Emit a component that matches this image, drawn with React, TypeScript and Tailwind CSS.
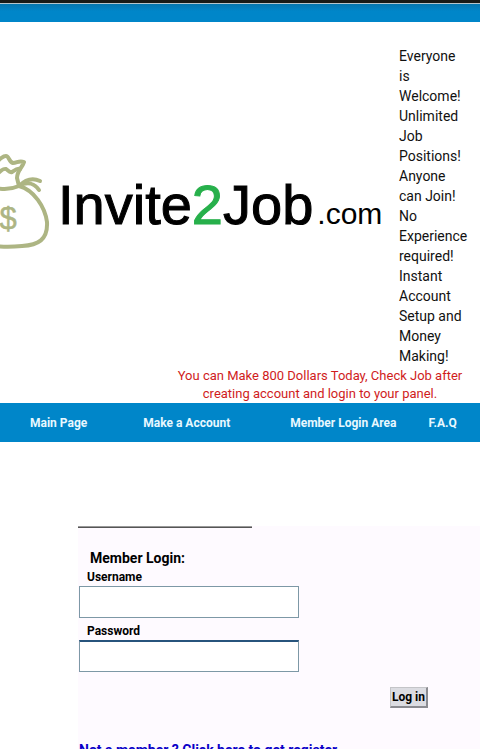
import React from "react";

const navLinks = [
  { label: "Main Page", href: "#main", className: "ml-[30px]" },
  { label: "Make a Account", href: "#register", className: "ml-14" },
  { label: "Member Login Area", href: "#login", className: "ml-15" },
  { label: "F.A.Q", href: "#faq", className: "ml-8" },
];

const MoneyBag: React.FC = () => (
  <svg
    viewBox="0 150 52 102"
    className="h-[102px] w-[52px] shrink-0"
    fill="none"
    stroke="#adb583"
    strokeWidth="4"
    strokeLinecap="round"
    strokeLinejoin="round"
    aria-hidden="true"
  >
    <path d="M-4 163C-1 160 2 156 6 156C9 156 9 162 13 163C17 163 19 160 24 162C22 168 17 171 17 178L19 186" />
    <path d="M-3 174C1 171 3 168 6 169C8 170 9 173 12 172C15 170 17 168 20 169" />
    <path d="M-4 188C4 190 12 189 19 186" />
    <path d="M19 186C25 180 32 177 40 181" />
    <path d="M19 186C28 181 35 184 39 190" />
    <path d="M19 186C34 190 45 207 47 222C48 240 38 245 22 246C12 247 3 247 -4 246" />
    <text
      x="8"
      y="229"
      textAnchor="middle"
      fontFamily="Liberation Sans, sans-serif"
      fontSize="31"
      fill="#adb583"
      strokeWidth="0.5"
    >
      $
    </text>
  </svg>
);

const Header: React.FC = () => (
  <header>
    <div className="h-1 border-b border-[#b5c6cc] bg-[#191a16]" />
    <div className="h-[18px] bg-linear-to-b from-[#0676ad] to-[#0086c9] to-40%" />
    <div className="flex items-start pt-6">
      <div className="flex min-w-0 flex-1 pt-[104px]">
        <MoneyBag />
        <h1 className="ml-1 flex items-baseline whitespace-nowrap pl-0.5 pt-[23px] font-['Liberation_Sans',sans-serif] leading-[64px] text-black [-webkit-text-stroke:1px]">
          <span className="text-[56px]">
            Invite<span className="text-[#27b04b]">2</span>Job
          </span>
          <span className="ml-1 text-[30px] [-webkit-text-stroke:0px]">.com</span>
        </h1>
      </div>
      <p className="w-[81px] shrink-0 pr-3 text-sm leading-5 text-[#111]">
        Everyone is Welcome! Unlimited Job Positions! Anyone can Join! No
        Experience required! Instant Account Setup and Money Making!
      </p>
    </div>
    <p className="ml-auto w-80 px-4 pt-px text-center text-[13px] leading-[18px] text-[#d01c1c]">
      You can Make 800 Dollars Today, Check Job after creating account and
      login to your panel.
    </p>
  </header>
);

const NavBar: React.FC = () => (
  <nav className="flex h-[39px] items-center whitespace-nowrap bg-[#0086c9] text-xs font-bold text-[#e8f8ff]">
    {navLinks.map((link) => (
      <a key={link.label} href={link.href} className={link.className}>
        {link.label}
      </a>
    ))}
  </nav>
);

const LoginForm: React.FC = () => (
  <form
    className="ml-[78px] mt-[84px] bg-[#fefaff] pb-8 text-black"
    onSubmit={(e) => e.preventDefault()}
  >
    <div className="h-0.5 w-[174px] border-t border-[#999] bg-[#555]" />
    <h2 className="ml-3 mt-5 text-sm font-bold leading-5">Member Login:</h2>
    <div className="flex w-[221px] flex-col pl-px">
      <label htmlFor="username" className="pl-2 text-xs font-bold leading-[18px]">
        Username
      </label>
      <input
        id="username"
        type="text"
        className="h-8 border border-[#7d98a6] bg-white px-2 text-sm outline-none"
      />
      <label htmlFor="password" className="mt-1 pl-2 text-xs font-bold leading-[18px]">
        Password
      </label>
      <input
        id="password"
        type="password"
        className="h-8 border border-t-2 border-[#7d98a6] border-t-[#27547c] bg-white px-2 text-sm outline-none"
      />
    </div>
    <div className="mt-[15px] flex justify-end pr-[52px]">
      <button
        type="submit"
        className="h-[21px] w-[38px] whitespace-nowrap border border-b-2 border-r-2 border-[#c4c4c8] border-b-[#8b8b91] border-r-[#8b8b91] bg-[#dcdce2] text-xs font-bold leading-[18px]"
      >
        Log in
      </button>
    </div>
    <a
      href="#register"
      className="ml-px mt-8 block text-sm font-bold leading-5 text-[#0a00c8]"
    >
      Not a member ? Click here to get register
    </a>
  </form>
);

export default function App() {
  return (
    <div className="h-screen overflow-hidden bg-white font-[Roboto,sans-serif]">
      <Header />
      <NavBar />
      <main>
        <LoginForm />
      </main>
    </div>
  );
}
